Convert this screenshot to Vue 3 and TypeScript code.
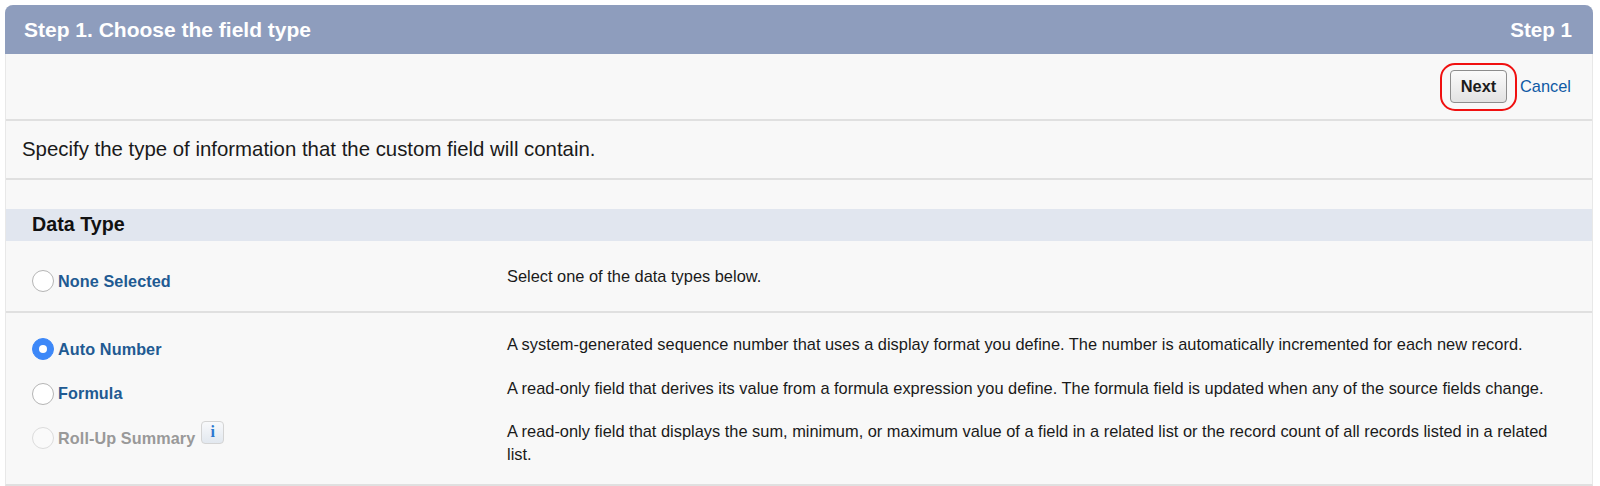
<script setup lang="ts">
interface Row { label: string; desc: string; state: 'on' | 'off' | 'disabled'; info?: boolean }
const rows: Row[] = [
  { label: 'Auto Number', desc: 'A system-generated sequence number that uses a display format you define. The number is automatically incremented for each new record.', state: 'on' },
  { label: 'Formula', desc: 'A read-only field that derives its value from a formula expression you define. The formula field is updated when any of the source fields change.', state: 'off' },
  { label: 'Roll-Up Summary', desc: 'A read-only field that displays the sum, minimum, or maximum value of a field in a related list or the record count of all records listed in a related list.', state: 'disabled', info: true },
]
</script>

<template>
  <div class="page">
    <section class="panel">
      <header class="head">
        <h2>Step 1. Choose the field type</h2>
        <span>Step 1</span>
      </header>
      <div class="toolbar">
        <span class="ring"><button class="next" type="button">Next</button></span>
        <a class="cancel">Cancel</a>
      </div>
      <p class="intro">Specify the type of information that the custom field will contain.</p>
      <div class="spacer"></div>
      <h3 class="band">Data Type</h3>
      <div class="none">
        <div class="opt">
          <span class="radio off"></span>
          <span class="label">None Selected</span>
        </div>
        <div class="desc">Select one of the data types below.</div>
      </div>
      <div class="list">
        <div v-for="r in rows" :key="r.label" class="row" :class="{ wrap: r.info }">
          <div class="opt">
            <span class="radio" :class="r.state"></span>
            <span class="label" :class="{ dim: r.state === 'disabled' }">{{ r.label }}</span>
            <span v-if="r.info" class="info">i</span>
          </div>
          <div class="desc">{{ r.desc }}</div>
        </div>
      </div>
    </section>
  </div>
</template>

<style>
html, body { margin: 0; background: #fff; }
</style>

<style scoped>
.page { padding: 5px 7px 0 5px; font-family: "Liberation Sans", Arial, sans-serif; height: 486px; box-sizing: border-box; overflow: hidden; }
.panel { background: #f8f8f8; border-bottom: 2px solid #e0e0e0; border-right: 1px solid #e8e8e8; border-left: 1px solid #e8e8e8; border-radius: 8px 8px 0 0; height: 481px; box-sizing: border-box; }
.head { height: 49px; margin: 0 -1px; background: #8e9dbd; border-radius: 8px 8px 0 0; display: flex; align-items: center; justify-content: space-between; padding: 0 21px 0 19px; color: #fff; font-weight: 700; font-size: 20.6px; box-sizing: border-box; }
.head h2 { margin: 0; font: inherit; font-size: 21px; }
.toolbar { height: 67px; border-bottom: 2px solid #e0e0e0; display: flex; align-items: center; justify-content: flex-end; box-sizing: border-box; padding-right: 21px; gap: 3px; }
.ring { border: 2px solid #f01010; border-radius: 15px; display: flex; width: 77px; height: 48px; box-sizing: border-box; align-items: center; justify-content: center; }
.next { width: 57px; height: 33px; padding: 0; border: 1px solid #8d8d8d; border-radius: 4px; background: linear-gradient(#fbfbfb, #e2e2e2); color: #1c1c1c; font: 700 16.4px "Liberation Sans", Arial, sans-serif; }
.cancel { color: #0f5aa5; font-size: 16.4px; }
.intro { margin: 0; height: 59px; line-height: 56px; padding-left: 16px; font-size: 20.4px; color: #1a1a1a; border-bottom: 2px solid #e0e0e0; box-sizing: border-box; }
.spacer { height: 29px; }
.band { margin: 0; height: 32px; line-height: 30px; background: #e1e6ef; padding-left: 26px; font-size: 19.7px; font-weight: 700; color: #111; }
.none { height: 72px; display: grid; grid-template-columns: 501px 1fr; border-bottom: 2px solid #e0e0e0; box-sizing: border-box; }
.list { padding-top: 14px; }
.row { display: grid; grid-template-columns: 501px 1fr; align-items: start; height: 44.5px; }
.opt { display: flex; align-items: center; padding-left: 26px; height: 44px; }
.none .opt { padding-top: 18px; }
.none .desc { padding-top: 23px; }
.radio { width: 22px; height: 22px; border-radius: 50%; box-sizing: border-box; border: 1.5px solid #b5b5b5; background: #fff; margin-right: 4px; flex: none; position: relative; }
.radio.on { background: #3d88f8; border-color: #3d88f8; }
.radio.on::after { content: ""; position: absolute; left: 5.5px; top: 5.5px; width: 8px; height: 8px; border-radius: 50%; background: #fff; }
.radio.disabled { border-color: #dcdcdc; background: #fafafa; }
.label { font-size: 16.2px; font-weight: 700; color: #215a92; letter-spacing: .1px; }
.label.dim { color: #999; }
.info { width: 23px; height: 23px; box-sizing: border-box; margin: -12px 0 0 6px; border: 1px solid #d4d4d4; border-radius: 4px; background: linear-gradient(#f8f9fb, #e2e8ef); color: #2a78d0; font: 700 16px/19px "Liberation Serif", serif; text-align: center; }
.desc { font-size: 16.4px; line-height: 24px; color: #1a1a1a; padding-right: 30px; }
.row .desc { padding-top: 4.5px; }
.row.wrap .desc { padding-top: 4px; line-height: 23px; }
</style>
